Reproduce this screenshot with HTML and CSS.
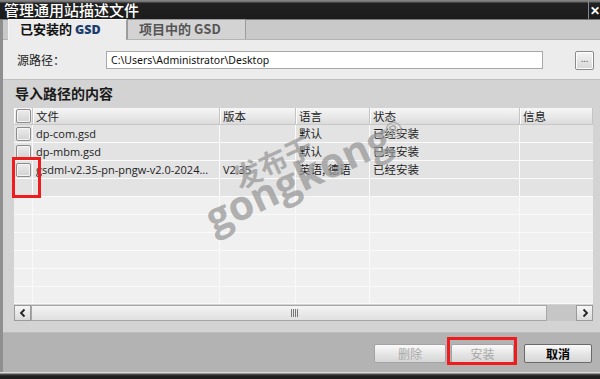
FILE: index.html
```html
<!DOCTYPE html>
<html lang="zh">
<head>
<meta charset="utf-8">
<title>管理通用站描述文件</title>
<link rel="stylesheet" href="styles.css">
</head>
<body>
<div class="window">
  <div class="titlebar">
    <span class="title">管理通用站描述文件</span>
    <span class="close">✕</span>
  </div>
  <div class="frame">
    <div class="tabbar">
      <div class="tab active">已安装的 <b class="gsd">GSD</b></div>
      <div class="tab">项目中的 GSD</div>
    </div>
    <div class="pathpanel">
      <span class="pathlabel">源路径：</span>
      <div class="pathinput">C:\Users\Administrator\Desktop</div>
      <div class="browse">...</div>
    </div>
    <div class="content">
      <div class="sectiontitle">导入路径的内容</div>
      <div class="table">
        <div class="row head">
          <div class="c cb"><span class="check"></span></div>
          <div class="c file">文件</div>
          <div class="c ver">版本</div>
          <div class="c lang">语言</div>
          <div class="c state">状态</div>
          <div class="c info">信息</div>
        </div>
        <div class="row filled">
          <div class="c cb"><span class="check"></span></div>
          <div class="c file latin">dp-com.gsd</div>
          <div class="c ver"></div>
          <div class="c lang">默认</div>
          <div class="c state">已经安装</div>
          <div class="c info"></div>
        </div>
        <div class="row filled">
          <div class="c cb"><span class="check"></span></div>
          <div class="c file latin">dp-mbm.gsd</div>
          <div class="c ver"></div>
          <div class="c lang">默认</div>
          <div class="c state">已经安装</div>
          <div class="c info"></div>
        </div>
        <div class="row filled">
          <div class="c cb"><span class="check"></span></div>
          <div class="c file latin">gsdml-v2.35-pn-pngw-v2.0-2024...</div>
          <div class="c ver latin">V2.35</div>
          <div class="c lang">英语, 德语</div>
          <div class="c state">已经安装</div>
          <div class="c info"></div>
        </div>
        <div class="row filled">
          <div class="c cb"></div><div class="c file"></div><div class="c ver"></div><div class="c lang"></div><div class="c state"></div><div class="c info"></div>
        </div>
        <div class="row">
          <div class="c cb"></div><div class="c file"></div><div class="c ver"></div><div class="c lang"></div><div class="c state"></div><div class="c info"></div>
        </div>
        <div class="row">
          <div class="c cb"></div><div class="c file"></div><div class="c ver"></div><div class="c lang"></div><div class="c state"></div><div class="c info"></div>
        </div>
        <div class="row">
          <div class="c cb"></div><div class="c file"></div><div class="c ver"></div><div class="c lang"></div><div class="c state"></div><div class="c info"></div>
        </div>
        <div class="row">
          <div class="c cb"></div><div class="c file"></div><div class="c ver"></div><div class="c lang"></div><div class="c state"></div><div class="c info"></div>
        </div>
        <div class="row">
          <div class="c cb"></div><div class="c file"></div><div class="c ver"></div><div class="c lang"></div><div class="c state"></div><div class="c info"></div>
        </div>
        <div class="row last">
          <div class="c cb"></div><div class="c file"></div><div class="c ver"></div><div class="c lang"></div><div class="c state"></div><div class="c info"></div>
        </div>
      </div>
      <div class="hscroll">
        <div class="sbtn">
          <svg width="10" height="10" viewBox="0 0 10 10"><path d="M6.5 1.5 L3 5 L6.5 8.5" fill="none" stroke="#222" stroke-width="1.8"/></svg>
        </div>
        <div class="thumb"><span class="grip"></span></div>
        <div class="track"></div>
        <div class="sbtn">
          <svg width="10" height="10" viewBox="0 0 10 10"><path d="M3.5 1.5 L7 5 L3.5 8.5" fill="none" stroke="#222" stroke-width="1.8"/></svg>
        </div>
      </div>
    </div>
    <div class="buttonbar">
      <div class="btn disabled del">删除</div>
      <div class="btn disabled inst">安装</div>
      <div class="btn cancel">取消</div>
    </div>
  </div>
  <div class="bottomedge"></div>
  <div class="mark mark-check"></div>
  <div class="mark mark-install"></div>
  <div class="watermark">
    <div class="wm1">发布于</div>
    <div class="wm2">gongkong</div>
    <div class="reg">®</div>
  </div>
</div>
</body>
</html>
```

FILE: styles.css
```css
* { box-sizing: border-box; }
html, body { margin: 0; padding: 0; }
body {
  width: 600px;
  height: 379px;
  overflow: hidden;
  background: #b3b3b3;
  font-family: "Noto Sans", "Noto Sans CJK SC", sans-serif;
  color: #222;
}
.window {
  position: relative;
  width: 600px;
  height: 379px;
  display: flex;
  flex-direction: column;
}
.titlebar {
  height: 20px;
  background: linear-gradient(#8a8a8a 0, #6a6a6a 2px, #222 3px, #1b1b1b 100%);
  display: flex;
  align-items: center;
  justify-content: space-between;
  color: #fff;
  border-bottom: 1px solid #777;
}
.title {
  font-family: "Noto Sans CJK SC", sans-serif;
  font-size: 15px;
  font-weight: 500;
  line-height: 18px;
  padding-left: 4px;
  padding-top: 1px;
}
.close {
  width: 12px;
  height: 19px;
  border-left: 1px solid #888;
  font-size: 12px;
  font-weight: bold;
  line-height: 19px;
  text-align: center;
  padding-top: 1px;
}
.frame {
  flex: 1;
  display: flex;
  flex-direction: column;
  border-left: 3px solid #8f8f8f;
  box-shadow: inset 1px 0 0 #d8d8d8;
}
.tabbar {
  height: 20px;
  background: #c9c9c9;
  display: flex;
  align-items: flex-end;
  padding-left: 5px;
  border-bottom: 1px solid #b4b4b4;
}
.tab {
  height: 20px;
  width: 119px;
  font-family: "Noto Sans CJK SC", sans-serif;
  font-size: 13px;
  font-weight: bold;
  color: #555;
  background: #d3d3d3;
  border: 1px solid #9a9a9a;
  border-bottom: none;
  padding-left: 11px;
  line-height: 18px;
}
.tab.active {
  background: #ececec;
  color: #111;
  border-color: #f6f6f6 #a0a0a0 #ececec #f6f6f6;
  height: 21px;
  margin-bottom: -1px;
}
.gsd { color: #1d3c6e; font-family: "Open Sans", sans-serif; font-size: 12.5px; }
.pathpanel {
  height: 40px;
  background: #ececec;
  border-bottom: 1px solid #c0c0c0;
  display: flex;
  align-items: center;
  padding-left: 14px;
  padding-right: 4px;
}
.pathlabel {
  font-family: "Noto Sans CJK SC", sans-serif;
  font-size: 12px;
  width: 89px;
  color: #222;
}
.pathinput {
  width: 437px;
  height: 18px;
  background: #fff;
  border: 1px solid #a8a8a8;
  font-size: 10.5px;
  line-height: 16px;
  padding-left: 4px;
  color: #111;
}
.browse {
  margin-left: 32px;
  width: 19px;
  height: 19px;
  border: 1px solid #8a8a8a;
  border-radius: 2px;
  background: linear-gradient(#f4f4f4, #d6d6d6);
  box-shadow: inset 0 0 0 1px #fff;
  font-size: 9px;
  line-height: 14px;
  text-align: center;
  color: #445;
  margin-top: 2px;
}
.content {
  height: 252px;
  background: #d3d3d3;
  padding: 4px 4px 0 11px;
  display: flex;
  flex-direction: column;
}
.sectiontitle {
  font-family: "Noto Sans CJK SC", sans-serif;
  font-size: 14px;
  font-weight: bold;
  height: 24px;
  line-height: 18px;
  padding-left: 1px;
  color: #1a1a1a;
}
.table {
  width: 579px;
  display: flex;
  flex-direction: column;
}
.row {
  display: flex;
  height: 18px;
  background: #f0f0f0;
}
.row.filled { background: #e3e3e3; }
.row.last { height: 17px; }
.c {
  height: 100%;
  border-right: 1px solid #fafafa;
  border-bottom: 1px solid #fafafa;
  font-family: "Noto Sans CJK SC", sans-serif;
  font-size: 11.5px;
  line-height: 17px;
  padding-left: 3px;
  white-space: nowrap;
  overflow: hidden;
  color: #222;
}
.c.latin { font-family: "Open Sans", "Noto Sans", sans-serif; font-size: 11px; }
.cb { width: 19px; padding-left: 2px; padding-top: 2px; }
.file { width: 187px; }
.ver { width: 76px; }
.lang { width: 74px; }
.state { width: 150px; }
.info { width: 73px; border-right: none; }
.row.head {
  height: 17px;
  background: linear-gradient(#f6f6f6, #e6e6e6 60%, #d8d8d8);
}
.row.head .c {
  border-right: 1px solid #c4c4c4;
  border-bottom: 1px solid #c8c8c8;
  box-shadow: inset 1px 0 0 #fff;
  line-height: 16px;
}
.row.head .cb { padding-top: 1px; }
.check {
  display: block;
  width: 15px;
  height: 14px;
  border: 1px solid #8c8c8c;
  border-radius: 2px;
  background: linear-gradient(#ececec, #d2d2d2);
  box-shadow: inset 0 0 0 1px #f4f4f4;
}
.hscroll {
  margin-top: 1px;
  width: 579px;
  height: 16px;
  display: flex;
  background: #c8c8c8;
}
.sbtn {
  width: 17px;
  height: 16px;
  border: 1px solid #9a9a9a;
  background: linear-gradient(#f6f6f6, #dadada);
  display: flex;
  align-items: center;
  justify-content: center;
}
.thumb {
  width: 516px;
  height: 16px;
  border: 1px solid #a6a6a6;
  background: linear-gradient(#f4f4f4, #e0e0e0);
  display: flex;
  align-items: center;
  justify-content: flex-end;
  padding-right: 248px;
}
.grip {
  display: block;
  width: 7px;
  height: 8px;
  background: repeating-linear-gradient(90deg, #777 0 1px, transparent 1px 2px);
}
.track { flex: 1; background: #c6c6c6; }
.buttonbar {
  flex: 1;
  background: #b3b3b3;
  display: flex;
  align-items: flex-start;
  padding-top: 11px;
  padding-left: 371px;
  border-top: 1px solid #bcbcbc;
}
.btn {
  height: 19px;
  border: 1px solid #8c8c8c;
  border-radius: 2px;
  background: linear-gradient(#fafafa, #e6e6e6 50%, #d6d6d6);
  font-family: "Noto Sans CJK SC", sans-serif;
  font-size: 12px;
  line-height: 17px;
  text-align: center;
}
.btn.disabled { color: #a8a8a8; border-color: #a4a4a4; }
.del { width: 72px; }
.inst { width: 63px; margin-left: 5px; }
.cancel { width: 68px; margin-left: 10px; font-weight: bold; color: #000; border-color: #6a6a6a; }
.bottomedge {
  height: 7px;
  background: linear-gradient(#d8d8d8 0, #d8d8d8 1px, #555 2px, #1e1e1e 4px);
}
.mark {
  position: absolute;
  border: 3px solid #ee1c1c;
}
.mark-check { left: 12px; top: 157px; width: 29px; height: 41px; }
.mark-install { left: 447px; top: 337px; width: 70px; height: 28px; }
.watermark {
  position: absolute;
  left: 190px;
  top: 183px;
  width: 230px;
  height: 80px;
  transform: rotate(-25deg);
  transform-origin: 0 0;
  color: rgba(150,150,150,0.72);
  pointer-events: none;
  white-space: nowrap;
}
.wm1 {
  font-family: "Noto Sans CJK SC", sans-serif;
  font-size: 28px;
  font-weight: bold;
  line-height: 30px;
  padding-left: 42px;
}
.wm2 {
  font-family: "Open Sans", sans-serif;
  font-size: 41px;
  font-weight: bold;
  line-height: 40px;
  margin-top: -10px;
}
.reg {
  position: absolute;
  left: 196px;
  top: 28px;
  font-family: "DejaVu Sans", sans-serif;
  font-size: 22px;
  line-height: 22px;
  color: #a8a8a8;
}
```
